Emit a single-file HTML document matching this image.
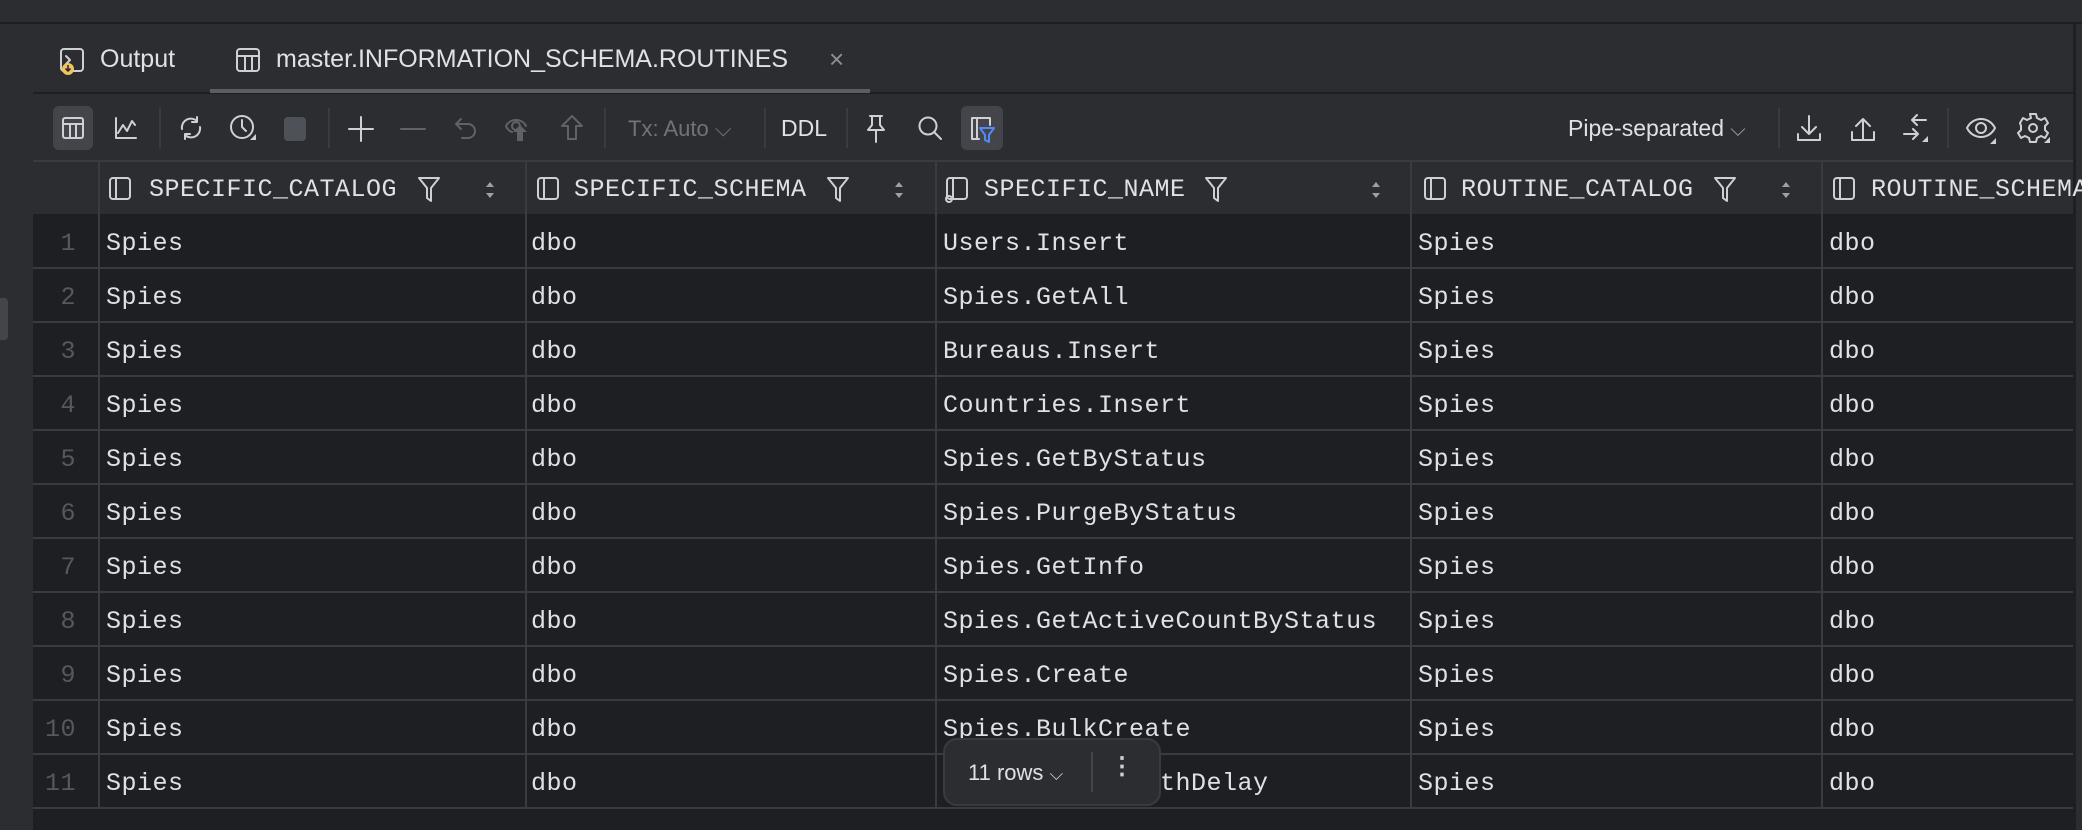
<!DOCTYPE html>
<html><head><meta charset="utf-8"><style>
*{margin:0;padding:0;box-sizing:border-box}
body{width:2082px;height:830px;background:#1e1f22;position:relative;overflow:hidden;font-family:"Liberation Sans",sans-serif;color:#dfe1e5}
.a{position:absolute}
.mono{font-family:"Liberation Mono",monospace;font-size:25px;letter-spacing:0.5px}
svg{position:absolute;overflow:visible}
.ic{stroke:#ced0d6;stroke-width:2;fill:none;stroke-linecap:round;stroke-linejoin:round}
.dim{stroke:#5f6268}
.sep{position:absolute;width:2px;height:40px;top:108px;background:#393b40}
.hdr{position:absolute;top:162px;height:52px;background:#2b2d30}
.vl{position:absolute;top:162px;width:2px;height:647px;background:#393b40}
.hl{position:absolute;left:33px;width:2040px;height:2px;background:#393b40}
.cell{position:absolute;height:54px;line-height:58px;white-space:nowrap}
</style></head><body>
<div class="a" style="left:0;top:0;width:2082px;height:22px;background:#2b2d30"></div>
<div class="a" style="left:0;top:22px;width:2082px;height:2px;background:#1e1f22"></div>
<div class="a" style="left:0;top:24px;width:33px;height:806px;background:#2b2d30"></div>
<div class="a" style="left:0;top:298px;width:8px;height:42px;background:#43454a;border-radius:0 4px 4px 0"></div>
<div class="a" style="left:33px;top:24px;width:2040px;height:68px;background:#2b2d30"></div>
<div class="a" style="left:33px;top:92px;width:2040px;height:2px;background:#1e1f22"></div>
<div class="a" style="left:33px;top:94px;width:2040px;height:66px;background:#2b2d30"></div>
<div class="a" style="left:33px;top:160px;width:2040px;height:2px;background:#393b40"></div>
<div class="a" style="left:2073px;top:24px;width:3px;height:806px;background:#1e1f22"></div>
<div class="a" style="left:2076px;top:24px;width:6px;height:806px;background:#2b2d30"></div>

<!-- tabs -->
<svg style="left:60px;top:48px" width="26" height="28"><rect x="1" y="1" width="22" height="22" rx="3" class="ic"/><path d="M6 8l4 4-4 4" class="ic"/><circle cx="8" cy="21" r="6" fill="#f2c55c"/><path d="M8 17v6M5.5 20.5L8 23l2.5-2.5" stroke="#2b2d30" stroke-width="1.6" fill="none"/></svg>
<div class="a" style="left:100px;top:45px;font-size:25px">Output</div>
<svg style="left:236px;top:48px" width="26" height="26"><rect x="1" y="1" width="22" height="22" rx="3" class="ic"/><path d="M1 8h22M9 8v15M16 8v15" class="ic"/></svg>
<div class="a" style="left:276px;top:45px;font-size:25px">master.INFORMATION_SCHEMA.ROUTINES</div>
<div class="a" style="left:829px;top:44px;font-size:26px;color:#8c8f94">×</div>
<div class="a" style="left:210px;top:89px;width:660px;height:4px;background:#5a5d63"></div>

<!-- toolbar -->
<div class="a" style="left:53px;top:106px;width:40px;height:44px;background:#43454a;border-radius:6px"></div>
<svg style="left:62px;top:117px" width="22" height="22"><rect x="1" y="1" width="20" height="20" rx="2" class="ic"/><path d="M1 7h20M8 7v14M14 7v14" class="ic"/></svg>
<svg style="left:114px;top:116px" width="24" height="24"><path d="M2 2v20h20M4 17l5-8 4 6 5-10 3 4" class="ic"/></svg>
<div class="sep" style="left:159px"></div>
<svg style="left:178px;top:115px" width="26" height="26"><path d="M4 14a9 9 0 0 1 15-8M22 12a9 9 0 0 1-15 8M19 2v5h-5M7 24v-5h5" class="ic"/></svg>
<svg style="left:230px;top:114px" width="28" height="28"><circle cx="12" cy="13" r="11" class="ic"/><path d="M12 6v7l4 4" class="ic"/><path d="M20 26l6 0 0-6z" fill="#ced0d6"/></svg>
<div class="a" style="left:284px;top:117px;width:22px;height:24px;background:#4e5157;border-radius:4px"></div>
<div class="sep" style="left:328px"></div>
<svg style="left:348px;top:116px" width="26" height="26"><path d="M13 1v24M1 13h24" class="ic"/></svg>
<svg style="left:400px;top:116px" width="26" height="26"><path d="M1 13h24" class="ic dim"/></svg>
<svg style="left:453px;top:115px" width="26" height="26"><path d="M8 4L3 9l5 5M3 9h12a7 7 0 0 1 0 14h-6" class="ic dim"/></svg>
<svg style="left:504px;top:114px" width="28" height="28"><path d="M2 12c4-8 16-8 20 0M2 12c1 3 3 5 6 6" class="ic dim"/><circle cx="12" cy="12" r="4" class="ic dim"/><path d="M13 27v-9h-4l7-7 7 7h-4v9z" fill="#5f6268"/></svg>
<svg style="left:559px;top:114px" width="26" height="28"><path d="M13 2L3 12h6v13h8V12h6z" class="ic dim"/></svg>
<div class="sep" style="left:604px"></div>
<div class="a" style="left:628px;top:116px;font-size:22px;color:#6f737a">Tx: Auto ⌵</div>
<div class="sep" style="left:764px"></div>
<div class="a" style="left:781px;top:115px;font-size:23px;color:#dfe1e5">DDL</div>
<div class="sep" style="left:846px"></div>
<svg style="left:864px;top:114px" width="24" height="30"><path d="M6 2h12M8 2v9l-4 5h16l-4-5V2M12 16v12" class="ic"/></svg>
<svg style="left:918px;top:116px" width="26" height="26"><circle cx="10" cy="10" r="8.5" class="ic"/><path d="M16 16l7 7" class="ic"/></svg>
<div class="a" style="left:961px;top:106px;width:42px;height:44px;background:#43454a;border-radius:6px"></div>
<svg style="left:969px;top:116px" width="28" height="28"><path d="M10 23H3V2h18v7M8 2v21" class="ic"/><path d="M11 12h14l-5 7v7l-4-2v-5z" stroke="#548af7" stroke-width="2" fill="none" stroke-linejoin="round"/></svg>

<div class="a" style="left:1568px;top:115px;font-size:23px">Pipe-separated <span style="color:#9da0a8;font-size:20px">⌵</span></div>
<div class="sep" style="left:1778px"></div>
<svg style="left:1796px;top:114px" width="26" height="28"><path d="M13 2v18M6 13l7 7 7-7M2 20v6h22v-6" class="ic"/></svg>
<svg style="left:1850px;top:114px" width="26" height="28"><path d="M13 26V6M6 12l7-7 7 7M2 18v8h22v-8" class="ic"/></svg>
<svg style="left:1900px;top:112px" width="30" height="32"><path d="M12 8h14M17 3l-5 5 5 5M4 22h14M13 17l5 5-5 5" class="ic"/><path d="M28 30l-6 0 6-6z" fill="#ced0d6"/></svg>
<div class="sep" style="left:1947px"></div>
<svg style="left:1965px;top:116px" width="32" height="28"><path d="M2 12c6-12 22-12 28 0c-6 12-22 12-28 0z" class="ic"/><circle cx="16" cy="12" r="5" class="ic"/><path d="M31 28l-6 0 6-6z" fill="#ced0d6"/></svg>
<svg style="left:2018px;top:112px" width="32" height="32"><path d="M12 2h6l1 4 4 2 4-2 3 5-3 3v4l3 3-3 5-4-2-4 2-1 4h-6l-1-4-4-2-4 2-3-5 3-3v-4L2 11l3-5 4 2 4-2z" class="ic"/><circle cx="15" cy="16" r="4" class="ic"/><path d="M32 31l-6 0 6-6z" fill="#ced0d6"/></svg>

<!-- header -->
<div class="hdr" style="left:33px;width:2040px"></div>
<div class="vl" style="left:98px"></div><div class="vl" style="left:525px"></div><div class="vl" style="left:935px"></div><div class="vl" style="left:1410px"></div><div class="vl" style="left:1821px"></div>

<div id="hd"></div>
<div id="rows"></div>

<!-- popup -->
<div class="a" style="left:943px;top:738px;width:218px;height:68px;background:#2b2d30;border:2px solid #393b40;border-radius:14px"></div>
<div class="a" style="left:968px;top:760px;font-size:22px">11 rows <span style="font-size:18px;color:#ced0d6">⌵</span></div>
<div class="a" style="left:1091px;top:752px;width:2px;height:40px;background:#43454a"></div>
<div class="a" style="left:1110px;top:752px;font-size:24px;font-weight:bold;color:#ced0d6">⋮</div>

<script>
const cols=[{i:109,t:149,f:428,s:490,n:"SPECIFIC_CATALOG"},{i:537,t:574,f:837,s:899,n:"SPECIFIC_SCHEMA"},{i:946,t:984,f:1215,s:1376,n:"SPECIFIC_NAME",k:1},{i:1424,t:1461,f:1724,s:1786,n:"ROUTINE_CATALOG"},{i:1833,t:1871,n:"ROUTINE_SCHEMA"}];
let h="";
cols.forEach(c=>{
h+=`<svg style="left:${c.i}px;top:177px" width="26" height="26"><rect x="1" y="1" width="20" height="21" rx="3" class="ic"/><path d="M7 1v21" class="ic"/>${c.k?'<circle cx="3" cy="22" r="3" fill="#2b2d30" class="ic"/>':''}</svg>`;
h+=`<div class="a mono" style="left:${c.t}px;top:175px;color:#dfe1e5;white-space:nowrap">${c.n}</div>`;
if(c.f){h+=`<svg style="left:${c.f-10}px;top:177px" width="24" height="26"><path d="M1 1h20l-8 10v13l-4-3V11z" class="ic"/></svg>`;
h+=`<svg style="left:${c.s-5}px;top:180px" width="10" height="20"><path d="M5 2l4 5H1zM5 18l4-5H1z" fill="#9da0a8"/></svg>`;}
});
document.getElementById("hd").outerHTML=h;
const names=["Users.Insert","Spies.GetAll","Bureaus.Insert","Countries.Insert","Spies.GetByStatus","Spies.PurgeByStatus","Spies.GetInfo","Spies.GetActiveCountByStatus","Spies.Create","Spies.BulkCreate","Spies.CreateWithDelay"];
let r="";
for(let k=0;k<11;k++){const y=215+k*54;
r+=`<div class="hl" style="top:${y+52}px"></div>`;
r+=`<div class="cell mono" style="left:33px;width:43px;text-align:right;top:${y}px;color:#55585e">${k+1}</div>`;
r+=`<div class="cell mono" style="left:106px;top:${y}px">Spies</div>`;
r+=`<div class="cell mono" style="left:531px;top:${y}px">dbo</div>`;
r+=`<div class="cell mono" style="left:943px;top:${y}px">${names[k]}</div>`;
r+=`<div class="cell mono" style="left:1418px;top:${y}px">Spies</div>`;
r+=`<div class="cell mono" style="left:1829px;top:${y}px">dbo</div>`;}
document.getElementById("rows").outerHTML=r;
</script>
</body></html>
